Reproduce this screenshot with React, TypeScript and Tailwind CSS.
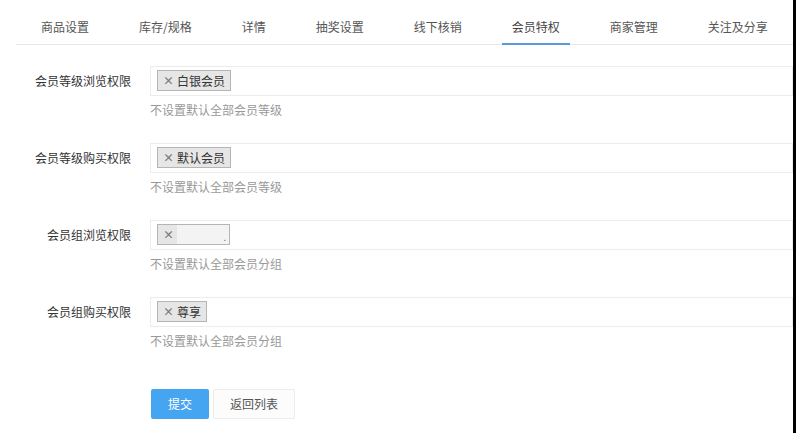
import React from 'react';

const font = { fontFamily: '"Noto Sans CJK SC", "Noto Sans", sans-serif' };

const tabs = ['商品设置', '库存/规格', '详情', '抽奖设置', '线下核销', '会员特权', '商家管理', '关注及分享'];

type Row = { label: string; tag: string; hint: string; blank?: boolean };

const rows: Row[] = [
  { label: '会员等级浏览权限', tag: '白银会员', hint: '不设置默认全部会员等级' },
  { label: '会员等级购买权限', tag: '默认会员', hint: '不设置默认全部会员等级' },
  { label: '会员组浏览权限', tag: '', hint: '不设置默认全部会员分组', blank: true },
  { label: '会员组购买权限', tag: '尊享', hint: '不设置默认全部会员分组' },
];

const Chip = ({ tag, blank }: { tag: string; blank?: boolean }) => (
  <span className="flex items-center h-[21px] border border-[#b5b5b5] bg-[#e6e6e6] text-[12px] leading-[19px] text-[#333]">
    <span className="w-[19px] pl-[5px] text-[11px] font-bold text-[#7a7a7a]">×</span>
    {blank ? (
      <span className="flex items-end justify-end w-[52px] h-full bg-[#f3f3f3] pr-[3px] pb-[1px] text-[9px] leading-[10px] text-[#777]">.</span>
    ) : (
      <span className="pr-[5px]">{tag}</span>
    )}
  </span>
);

export default function App() {
  return (
    <div className="w-[796px] h-[433px] bg-white flex overflow-hidden" style={font}>
      <div className="flex-1 flex flex-col">
        <div className="ml-[16px] h-[45px] border-b border-[#e6e6e6] flex gap-[30px] pl-[15px]">
          {tabs.map((t) => (
            <div
              key={t}
              className={
                'relative px-[10px] pt-[18px] text-[12px] leading-[18px] ' +
                (t === '会员特权' ? 'text-[#444]' : 'text-[#555]')
              }
            >
              {t}
              {t === '会员特权' && (
                <span className="absolute left-0 right-0 bottom-[-1px] h-[2px] bg-[#5b9bd5]" />
              )}
            </div>
          ))}
        </div>

        <div className="mt-[21px] flex flex-col gap-[24px]">
          {rows.map((r) => (
            <div key={r.label} className="flex gap-[19px]">
              <div className="w-[131px] h-[30px] flex items-center justify-end text-[12px] text-[#333]">
                {r.label}
              </div>
              <div className="flex-1 flex flex-col">
                <div className="h-[30px] border border-[#ececec] flex items-center pl-[6px] pb-px">
                  <Chip tag={r.tag} blank={r.blank} />
                </div>
                <div className="mt-[5px] text-[12px] leading-[18px] text-[#999]">{r.hint}</div>
              </div>
            </div>
          ))}
        </div>

        <div className="mt-[39px] ml-[151px] flex gap-[4px]">
          <button className="w-[58px] h-[30px] rounded-[2px] bg-[#45a5f0] text-white text-[12px]">提交</button>
          <button className="w-[82px] h-[30px] rounded-[2px] border border-[#ececec] bg-[#fcfcfc] text-[#555] text-[12px]">
            返回列表
          </button>
        </div>
      </div>
      <div className="w-[3px] bg-black" />
    </div>
  );
}
